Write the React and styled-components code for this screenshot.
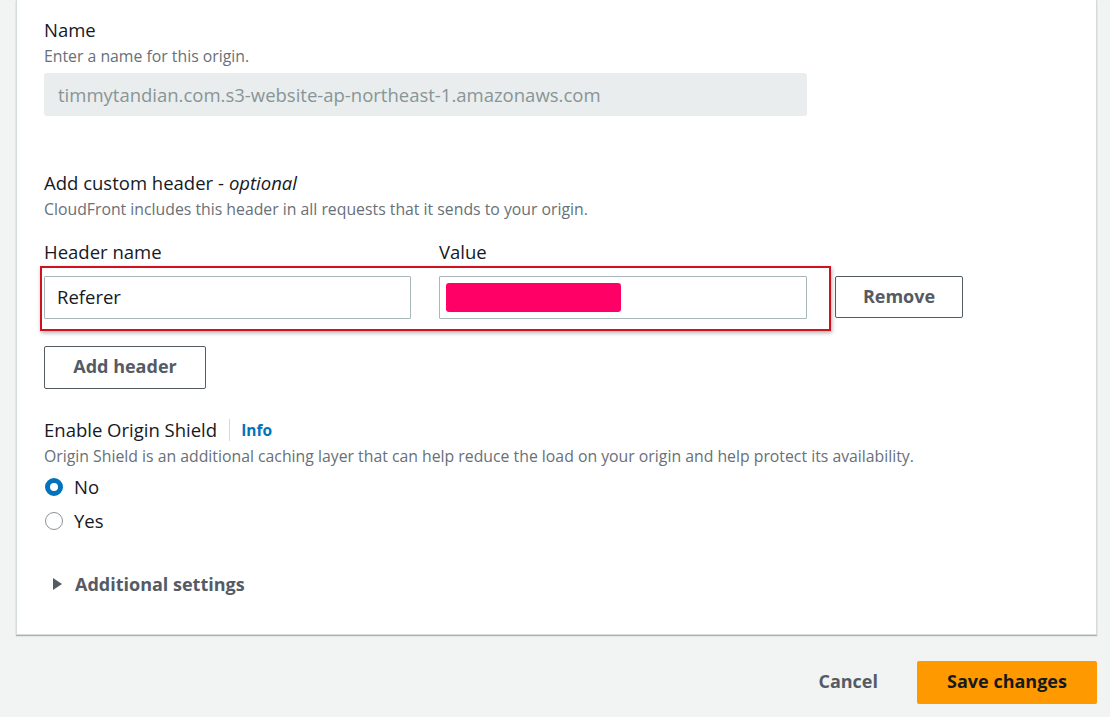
import React from "react";
import styled, { createGlobalStyle } from "styled-components";

const Global = createGlobalStyle`
  html, body { margin: 0; padding: 0; background: #f2f3f3; overflow: hidden; }
  body { font-family: "Open Sans", "Noto Sans", Arial, sans-serif; color: #16191f; }
  * { box-sizing: border-box; }
`;

const Page = styled.div`
  width: 1110px;
  height: 717px;
  padding: 0 13px 0 16px;
  display: flex;
  flex-direction: column;
`;

const Panel = styled.div`
  background: #fff;
  border: 1px solid #d5dbdb;
  border-top: none;
  box-shadow: 0 1px 1px 0 rgba(0, 28, 36, 0.3);
  padding: 19px 27px 39px;
  display: flex;
  flex-direction: column;
`;

const Label = styled.div`
  font-size: 18.5px;
  line-height: 22px;
  color: #16191f;
  display: flex;
  align-items: center;
  margin-top: ${(p) => p.$mt || 0}px;
  em { font-style: italic; margin-left: 5px; }
`;

const Desc = styled.div`
  font-size: 15.8px;
  line-height: 20px;
  color: #687078;
  margin-top: 5px;
  white-space: nowrap;
`;

const DisabledInput = styled.div`
  width: 763px;
  height: 43px;
  margin-top: 7px;
  background: #eaeded;
  border-radius: 3px;
  font-size: 18.5px;
  color: #879596;
  display: flex;
  align-items: center;
  padding-left: 14px;
`;

const HeaderGrid = styled.div`
  display: grid;
  grid-template-columns: 367px 368px 128px;
  column-gap: 28px;
  margin-top: 22px;
`;

const ColLabel = styled.div`
  font-size: 18.5px;
  line-height: 22px;
  color: #16191f;
  margin-bottom: 13px;
`;

const Row = styled.div`
  grid-column: 1 / -1;
  display: grid;
  grid-template-columns: 367px 368px 128px;
  column-gap: 28px;
  position: relative;
`;

const Highlight = styled.div`
  position: absolute;
  left: -4px;
  top: -10px;
  width: 791px;
  height: 65px;
  border: 2px solid #d0111f;
  box-shadow: 1px 2px 4px rgba(0, 0, 0, 0.3);
  pointer-events: none;
`;

const TextInput = styled.div`
  height: 43px;
  border: 1px solid #aab7b8;
  border-radius: 1px;
  font-size: 18.5px;
  color: #16191f;
  display: flex;
  align-items: center;
  padding-left: 12px;
  padding-bottom: 2px;
`;

const Redaction = styled.div`
  width: 175px;
  height: 29px;
  background: #ff0066;
  border-radius: 3px;
  margin-left: -6px;
  margin-top: 2px;
`;

const Button = styled.button`
  height: ${(p) => p.$h || 43}px;
  width: ${(p) => p.$w}px;
  border: 1px solid #545b64;
  border-radius: 2px;
  background: #fff;
  font-family: inherit;
  font-size: 18px;
  font-weight: 700;
  color: #545b64;
  padding: 0 0 3px;
  margin-top: ${(p) => p.$mt || 0}px;
  display: flex;
  align-items: center;
  justify-content: center;
`;

const InfoSep = styled.span`
  width: 1px;
  height: 22px;
  background: #d5dbdb;
  margin: 0 11px 0 12px;
`;

const InfoLink = styled.span`
  font-size: 15.5px;
  font-weight: 700;
  color: #0073bb;
`;

const RadioGroup = styled.div`
  display: flex;
  flex-direction: column;
  gap: 10px;
  margin-top: 9px;
`;

const RadioRow = styled.label`
  display: flex;
  align-items: center;
  font-size: 18.5px;
  line-height: 24px;
  color: #16191f;
  gap: 11px;
  padding-left: 1px;
`;

const RadioDot = styled.span`
  width: 18px;
  height: 18px;
  border-radius: 50%;
  border: ${(p) => (p.$checked ? "5px solid #0073bb" : "1.5px solid #879596")};
  background: #fff;
  flex: none;
`;

const Expander = styled.div`
  display: flex;
  align-items: center;
  gap: 13px;
  margin-top: 40px;
  padding-left: 9px;
  font-size: 18px;
  line-height: 22px;
  font-weight: 700;
  color: #545b64;
`;

const Caret = styled.span`
  width: 0;
  height: 0;
  border-top: 6px solid transparent;
  border-bottom: 6px solid transparent;
  border-left: 9px solid #545b64;
`;

const Footer = styled.div`
  display: flex;
  justify-content: flex-end;
  align-items: center;
  gap: 39px;
  margin-top: 26px;
`;

const LinkButton = styled.button`
  border: none;
  background: transparent;
  font-family: inherit;
  font-size: 18px;
  font-weight: 700;
  color: #545b64;
  padding: 0 0 3px;
`;

const PrimaryButton = styled.button`
  width: 180px;
  height: 43px;
  border: none;
  border-radius: 2px;
  background: #ff9900;
  font-family: inherit;
  font-size: 18px;
  font-weight: 700;
  color: #16191f;
  padding: 0 0 3px;
`;

export default function App() {
  return (
    <Page>
      <Global />
      <Panel>
        <Label>Name</Label>
        <Desc>Enter a name for this origin.</Desc>
        <DisabledInput>timmytandian.com.s3-website-ap-northeast-1.amazonaws.com</DisabledInput>

        <Label $mt={56}>
          Add custom header -<em>optional</em>
        </Label>
        <Desc>CloudFront includes this header in all requests that it sends to your origin.</Desc>

        <HeaderGrid>
          <ColLabel>Header name</ColLabel>
          <ColLabel>Value</ColLabel>
          <div />
          <Row>
            <Highlight />
            <TextInput>Referer</TextInput>
            <TextInput>
              <Redaction />
            </TextInput>
            <Button $w={128} $h={42}>Remove</Button>
          </Row>
        </HeaderGrid>

        <Button $w={162} $mt={27}>Add header</Button>

        <Label $mt={30}>
          Enable Origin Shield
          <InfoSep />
          <InfoLink>Info</InfoLink>
        </Label>
        <Desc>
          Origin Shield is an additional caching layer that can help reduce the load on your origin and help protect its availability.
        </Desc>
        <RadioGroup>
          <RadioRow>
            <RadioDot $checked />
            No
          </RadioRow>
          <RadioRow>
            <RadioDot />
            Yes
          </RadioRow>
        </RadioGroup>

        <Expander>
          <Caret />
          Additional settings
        </Expander>
      </Panel>
      <Footer>
        <LinkButton>Cancel</LinkButton>
        <PrimaryButton>Save changes</PrimaryButton>
      </Footer>
    </Page>
  );
}
